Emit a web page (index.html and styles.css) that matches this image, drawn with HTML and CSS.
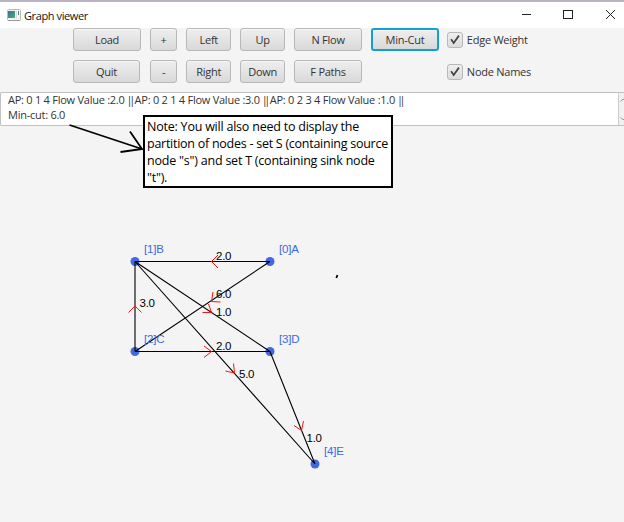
FILE: index.html
```html
<!DOCTYPE html>
<html lang="en">
<head>
<meta charset="utf-8">
<title>Graph viewer</title>
<link rel="stylesheet" href="styles.css">
</head>
<body>
<div class="window">
  <header class="titlebar">
    <svg class="app-icon" width="14" height="12" viewBox="0 0 14 12"><defs><linearGradient id="g" x2="1" y2="1"><stop offset="0" stop-color="#356ca0"/><stop offset="1" stop-color="#4fae6d"/></linearGradient></defs><rect x=".5" y=".5" width="13" height="11" rx="1" fill="#f5f5f5" stroke="#b9b9b9"/><path d="M1 11.5h12" stroke="#999"/><rect x="1" y="2" width="7" height="7" fill="url(#g)"/><path d="M9.5 2v7.500" stroke="#ddd"/><path d="M11.500 2v4" stroke="#3e9181"/></svg>
    <h1 class="title">Graph viewer</h1>
    <svg class="controls" width="100" height="14" viewBox="0 0 100 14" fill="none" stroke="#222"><path d="M0 6.500h9"/><rect x="41.500" y="2.500" width="9" height="8"/><path d="M84 2l9 9M93 2l-9 9"/></svg>
  </header>
  <div class="toolbar">
    <button class="btn">Load</button><button class="btn">+</button><button class="btn">Left</button><button class="btn">Up</button><button class="btn">N Flow</button><button class="btn focused">Min-Cut</button>
    <div class="check"><svg class="box" width="16" height="16" viewBox="0 0 16 16"><path d="M3.500 7.200L6.500 11.500 12.500 3" /></svg><span>Edge Weight</span></div>
    <button class="btn quit">Quit</button><button class="btn">-</button><button class="btn">Right</button><button class="btn">Down</button><button class="btn">F Paths</button>
    <div class="check last"><svg class="box" width="16" height="16" viewBox="0 0 16 16"><path d="M3.500 7.200L6.500 11.500 12.500 3" /></svg><span>Node Names</span></div>
  </div>
  <div class="output">
    <div class="lines">
      <p class="paths">AP: 0 1 4 Flow Value :2.0 <span class="bar">||</span> AP: 0 2 1 4 Flow Value :3.0 <span class="bar">||</span> AP: 0 2 3 4 Flow Value :1.0 <span class="bar">||</span></p>
      <p class="cut">Min-cut: 6.0</p>
    </div>
    <svg class="scroll" width="6" height="32" viewBox="0 0 6 32" fill="none" stroke="#777"><path d="M2 7l3-3 3 3M2 26l3 3 3-3"/></svg>
  </div>
  <svg class="graph" width="624" height="522" viewBox="0 0 624 522">
    <g class="nodes"><circle cx="270" cy="261.500" r="4.500"/><circle cx="135" cy="261.500" r="4.500"/><circle cx="135" cy="351.500" r="4.500"/><circle cx="270" cy="351.500" r="4.500"/><circle cx="315" cy="464" r="4.500"/></g>
    <path class="edges" d="M270 261.500H135M270 261.500L135 351.500M135 351.500V261.500M135 261.500L270 351.500M135 351.500H270M135 261.500L315 464M270 351.500L315 464"/>
    <path class="heads" d="M218 255l-6.500 6.500 6.500 6.500M213 292l-1.500 9.500 9 .5M208.500 304l3 8.500h-9M204 346l7.500 5.500-7.500 6M128.500 312.500l6.500-6.500 6.500 6.500M233.500 363.500l1 9.500-9-2M303.500 421l-2 9.500-7.500-5"/>
    <g class="weights"><text x="216" y="260" textLength="15.500">2.0</text><text x="216" y="298" textLength="15.500">6.0</text><text x="216" y="316" textLength="15.500">1.0</text><text x="216" y="350" textLength="15.500">2.0</text><text x="139.500" y="307" textLength="15.500">3.0</text><text x="239" y="378" textLength="15.500">5.0</text><text x="306.500" y="442" textLength="15.500">1.0</text></g>
    <g class="names"><text x="279" y="253" textLength="20">[0]A</text><text x="144" y="253" textLength="20">[1]B</text><text x="144" y="343" textLength="20.500">[2]C</text><text x="279" y="343" textLength="20.500">[3]D</text><text x="324" y="455" textLength="20">[4]E</text></g>
    <path class="pointer" d="M69.500 125L142 149M130 131.500L142 149 120.500 152"/>
    <path class="mark" d="M337.500 275l-1.200 3"/>
  </svg>
  <aside class="note"><p class="loose">Note: You will also need to display the</p><p>partition of nodes - set S (containing source</p><p class="loose">node "s") and set T (containing sink node</p><p>"t").</p></aside>
</div>
</body>
</html>
```
FILE: styles.css
```css
* { box-sizing: border-box; }
body { margin: 0; overflow: hidden; background: #f4f4f4; }
p, h1 { margin: 0; }
.window { position: relative; width: 624px; height: 522px; overflow: hidden; font: 11px "Open Sans", sans-serif; color: #333; background: #f4f4f4; }
.titlebar { height: 28px; border-top: 2px solid #bab2c4; background: #fff; display: flex; align-items: center; padding: 0 2px 0 7px; }
.app-icon { margin-bottom: 1px; }
.title { font-size: 11px; font-weight: 400; color: #111; margin: 0 0 0 3px; flex: 1; letter-spacing: -.4px; }
.toolbar { display: grid; grid-template-columns: 68px 27.500px 45px 45px 68px 68px auto; grid-template-rows: 23px 23px; gap: 9px 8.900px; padding: 0 0 9px 73px; height: 64px; letter-spacing: -.25px; }
.btn { font: inherit; letter-spacing: inherit; color: #333; padding: 0 0 1px; border: 1px solid #b8b8b8; border-radius: 3px; background: linear-gradient(#eee, #d9d9d9); box-shadow: inset 0 1px #f7f7f7; }
.focused { border: 2px solid #129fd1; }
.quit { width: 67px; }
.check { display: flex; align-items: center; gap: 4px; margin-left: -1px; }
.last { grid-column: 7; }
.box { border: 1px solid #b8b8b8; border-radius: 3px; background: linear-gradient(#eee, #dcdcdc); fill: none; stroke: #444; stroke-width: 2; }
.output { height: 34px; border: 1px solid #c1c1c1; border-right: 0; border-radius: 2px 0 0 2px; background: #fff; display: flex; justify-content: space-between; }
.lines { padding-left: 7px; line-height: 15px; white-space: nowrap; margin-top: -1px; letter-spacing: -.25px; }
.bar { letter-spacing: -3.400px; margin: 0 .2px 0 -.7px; }
.scroll { background: #f1f1f1; border-left: 1px solid #ccc; flex: none; }
.graph { position: absolute; left: 0; top: 0; }
.nodes { fill: #4169e1; }
.edges { fill: none; stroke: #000; stroke-width: 1.1; }
.heads { fill: none; stroke: #f11; stroke-width: 1; }
.weights, .names { font: 11.500px "Liberation Sans", sans-serif; fill: #000; }
.names { fill: #4169e1; }
.pointer, .mark { fill: none; stroke: #000; stroke-width: 1.8; }
.note { position: absolute; left: 143px; top: 115px; width: 250px; height: 73px; border: 2px solid #000; background: #fff; color: #000; font: 12.500px/17px "Open Sans", sans-serif; padding: 1px 2px; white-space: nowrap; letter-spacing: -.26px; }
.loose { letter-spacing: -.22px; }
```
